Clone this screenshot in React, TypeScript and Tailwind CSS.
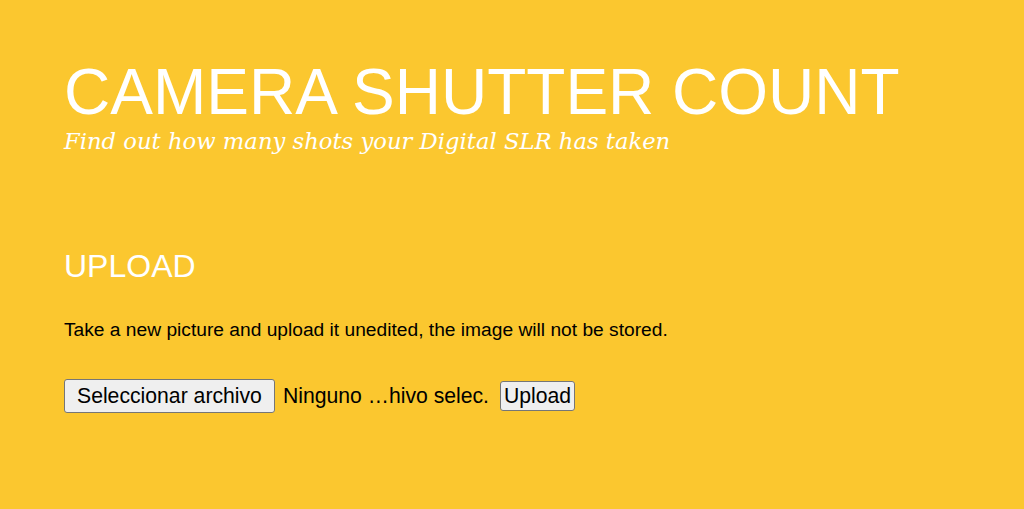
const App = () => {
  return (
    <div className="min-h-[509px] w-full bg-[#fbc72f] px-16 pt-[60px] font-['Liberation_Sans',Arial,sans-serif]">
      <header>
        <h1 className="text-[64px] leading-[64px] text-white">CAMERA SHUTTER COUNT</h1>
        <p className="mt-[5px] text-[22.7px] leading-[24px] italic text-white font-['DejaVu_Serif',Georgia,serif]">
          Find out how many shots your Digital SLR has taken
        </p>
      </header>
      <section className="mt-[97px]">
        <h2 className="text-[32px] leading-[32px] text-white">UPLOAD</h2>
        <p className="mt-[38px] text-[19.2px] leading-[19px] text-black">
          Take a new picture and upload it unedited, the image will not be stored.
        </p>
        <form className="mt-[40px] flex items-center text-[21.2px] text-black">
          <span className="flex items-center">
            <button
              type="button"
              className="h-[34px] rounded-[3px] border border-[#767676] bg-[#efefef] px-[12px] leading-none"
            >
              Seleccionar archivo
            </button>
            <span className="ml-[8px]">Ninguno …hivo selec.</span>
          </span>
          <button
            type="submit"
            className="ml-[11px] h-[30px] rounded-[3px] border border-[#767676] bg-[#efefef] px-[3px] leading-none"
          >
            Upload
          </button>
        </form>
      </section>
    </div>
  );
};

export default App;
